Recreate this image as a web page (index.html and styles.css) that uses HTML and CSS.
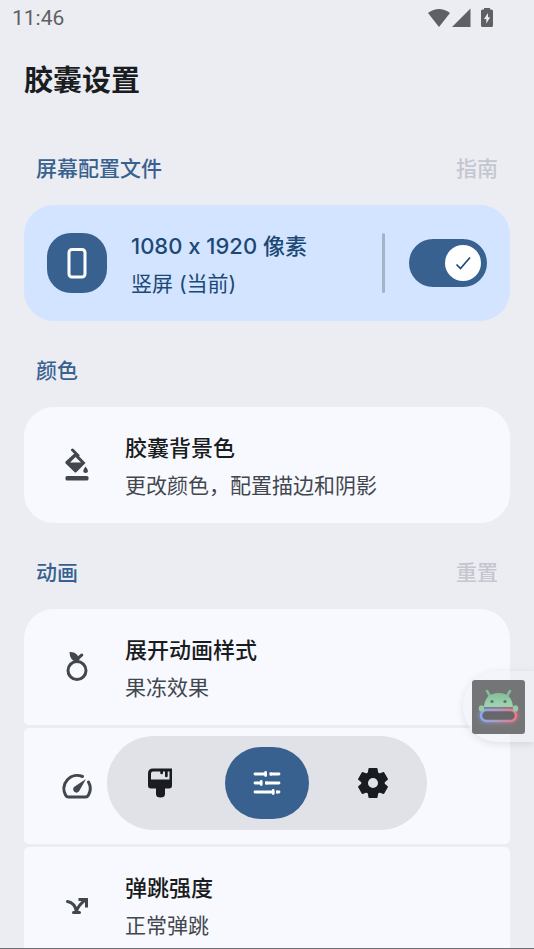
FILE: index.html
```html
<!DOCTYPE html>
<html lang="zh-CN">
<head>
<meta charset="utf-8">
<meta name="viewport" content="width=device-width, initial-scale=1">
<title>胶囊设置</title>
<link rel="stylesheet" href="styles.css">
</head>
<body>
<div class="app">
  <header class="status">
    <span class="clock">11:46</span>
    <span class="signals">
      <svg width="22" height="20" viewBox="0 0 22 20"><path d="M0 5Q11-3 22 5L11 19Z"/></svg>
      <svg width="19" height="20" viewBox="0 0 19 20"><path d="M18.500 .5V19H0Z"/></svg>
      <svg class="battery" width="12" height="20" viewBox="0 0 12 20"><path fill-rule="evenodd" d="M3 1.500V0H9V1.500H10.500Q12 1.500 12 3V17.500Q12 19 10.500 19H1.500Q0 19 0 17.500V3Q0 1.500 1.500 1.500ZM7 5L3 11H5.300V15.500L9.200 9.300H7Z"/></svg>
    </span>
  </header>
  <main class="content">
    <h1>胶囊设置</h1>

    <section>
      <div class="section-head"><h2>屏幕配置文件</h2><button class="text-button" type="button">指南</button></div>
      <div class="card profile">
        <span class="tile">
          <svg width="30" height="34" viewBox="0 0 30 34"><rect x="7" y="3.500" width="16" height="27.500" rx="3" fill="none" stroke="#fff" stroke-width="3"/></svg>
        </span>
        <label class="text" for="profile-switch"><span class="title">1080 x 1920 像素</span><span class="sub">竖屏 (当前)</span></label>
        <span class="divider"></span>
        <span class="switch">
          <input type="checkbox" id="profile-switch" checked>
          <svg class="tick" width="36" height="36" viewBox="0 0 36 36"><path d="M11.500 19.500L15.500 23.500L25 12.500" fill="none" stroke="#1c4a78" stroke-width="1.700"/></svg>
        </span>
      </div>
    </section>

    <section>
      <div class="section-head"><h2>颜色</h2></div>
      <button class="card" type="button">
        <span class="icon">
          <svg width="24" height="34" viewBox="0 0 24 34"><path d="M7.500 2L13 7.500" fill="none" stroke="#42474e" stroke-width="3" stroke-linecap="round"/><path d="M10.500 4.500L20.500 15L11.500 24Q10.500 25 9.500 24L.6 15.500Q0 14.500 .6 13.500ZM10.500 9L5 14.500H16Z" fill="#42474e" fill-rule="evenodd"/><path d="M20.500 18.500Q23 21.500 23 23Q23 25 20.600 25Q18.200 25 18.200 23Q18.200 21.500 20.500 18.500Z" fill="#42474e"/><rect x=".5" y="28" width="23" height="4.500" rx="1.500" fill="#42474e"/></svg>
        </span>
        <span class="text"><span class="title">胶囊背景色</span><span class="sub">更改颜色，配置描边和阴影</span></span>
      </button>
    </section>

    <section>
      <div class="section-head"><h2>动画</h2><button class="text-button" type="button">重置</button></div>
      <div class="group">
        <button class="card" type="button">
          <span class="icon">
            <svg width="24" height="32" viewBox="0 0 24 32"><circle cx="12" cy="19.500" r="9" fill="none" stroke="#42474e" stroke-width="3"/><path d="M4.500 1Q13 .5 14 8.500Q14 11 12 11Q4.500 9.500 4.500 1Z" fill="#42474e"/><path d="M12.500 10Q13 6.500 16.800 4" fill="none" stroke="#42474e" stroke-width="3" stroke-linecap="round"/></svg>
          </span>
          <span class="text"><span class="title">展开动画样式</span><span class="sub">果冻效果</span></span>
        </button>
        <button class="card" type="button" aria-label="动画速度">
          <span class="icon">
            <svg width="32" height="28" viewBox="0 0 32 28"><path d="M21.500 4.500A13.300 13.300 0 0 0 4.500 23Q5.500 25 7.500 25H24.500Q26.500 25 27.500 23A13.300 13.300 0 0 0 27.500 10" fill="none" stroke="#42474e" stroke-width="3" stroke-linecap="round"/><path d="M25 7L18.500 18.500A3.300 3.300 0 1 1 13.700 14.500Z" fill="#42474e"/></svg>
          </span>
        </button>
        <button class="card" type="button">
          <span class="icon">
            <svg width="24" height="20" viewBox="0 0 24 20"><g fill="none" stroke="#42474e" stroke-width="3"><path d="M2.500 6.500Q10 8 11.500 16.500Q13 10 21 4.500" stroke-linecap="round"/><path d="M13.500 4.500H21.500V12.500"/><path d="M8.500 17.500H14.500" stroke-linecap="round"/></g></svg>
          </span>
          <span class="text"><span class="title">弹跳强度</span><span class="sub">正常弹跳</span></span>
        </button>
      </div>
    </section>
  </main>

  <nav class="dock" aria-label="导航">
    <button type="button" aria-label="外观">
      <svg width="26" height="30" viewBox="0 0 26 30"><path fill="#191c20" fill-rule="evenodd" d="M5 .5H24V17.500Q24 20.500 21 20.500H17V26Q17 29.500 12.500 29.500Q8 29.500 8 26V20.500H3Q0 20.500 0 17.500V5.500Q0 .5 5 .5ZM5 3.500Q3 3.500 3 5.500V11.500H21.500V3.500H19.700V8Q19.700 9.200 18.300 9.200Q17 9.200 17 8V3.500H15V5Q15 6.200 13.700 6.200Q12.300 6.200 12.300 5V3.500Z"/></svg>
    </button>
    <button class="active" type="button" aria-label="设置" aria-current="page">
      <svg width="28" height="26" viewBox="0 0 28 26"><g fill="none" stroke="#fff" stroke-width="2.800"><path stroke-linecap="round" d="M2 4H12M2 13H7.500M2 22H20M18 4H26M14 13H26M25 22H26"/><path d="M16.500 4H19M12 13H15M23 22H25"/><path stroke-linecap="round" d="M12.600 2.500V5.500M8.200 11.500V14.500M20.200 20.500V23.500"/></g></svg>
    </button>
    <button type="button" aria-label="更多">
      <svg width="30" height="30" viewBox="0 0 30 30"><path fill="#191c20" fill-rule="evenodd" stroke="#191c20" stroke-width="1.500" stroke-linejoin="round" d="M11.200 .8H18.800L19.500 5L21.700 6.300L25.600 4.800L29.200 11.200L26 13.800V16.200L29.200 18.800L25.600 25.200L21.700 23.700L19.500 25L18.800 29.200H11.200L10.500 25L8.300 23.700L4.400 25.200L.8 18.800L4 16.200V13.800L.8 11.200L4.400 4.800L8.300 6.300L10.500 5ZM15 9.200A5.800 5.800 0 1 0 15 20.800A5.800 5.800 0 1 0 15 9.200Z"/></svg>
    </button>
  </nav>

  <button class="floating" type="button" aria-label="悬浮球">
    <svg width="53" height="54" viewBox="0 0 53 54">
      <defs>
        <linearGradient id="ring"><stop offset="0" stop-color="#8fa6ee"/><stop offset=".45" stop-color="#a99bc4"/><stop offset="1" stop-color="#f27683"/></linearGradient>
        <linearGradient id="head" x2="0" y2="1"><stop offset="0" stop-color="#83bd98"/><stop offset="1" stop-color="#a2d9b3"/></linearGradient>
        <filter id="glow" x="-20%" y="-50%" width="140%" height="200%"><feGaussianBlur stdDeviation="2"/></filter>
      </defs>
      <rect width="53" height="54" rx="3" fill="#747577"/>
      <path d="M15 11L18 16M38 11L35 16" stroke="#83bd98" stroke-width="2.500" stroke-linecap="round"/>
      <path d="M12 27Q13 13 26.500 13Q40 13 41 27Z" fill="url(#head)"/>
      <circle cx="20" cy="21.500" r="1.600" fill="#5f7468"/><circle cx="33" cy="21.500" r="1.600" fill="#5f7468"/>
      <rect x="9" y="30" width="35" height="11" rx="5.500" fill="none" stroke="url(#ring)" stroke-width="4" opacity=".6" filter="url(#glow)"/>
      <rect x="9" y="30" width="35" height="11" rx="5.500" fill="#66676a" stroke="url(#ring)" stroke-width="2.500"/>
      <ellipse cx="9.500" cy="28.500" rx="2.700" ry="3.200" fill="#94cba7"/><ellipse cx="43.500" cy="28.500" rx="2.700" ry="3.200" fill="#94cba7"/>
    </svg>
  </button>
</div>
</body>
</html>
```
FILE: styles.css
```css
* { box-sizing: border-box; }

body {
  margin: 0;
  background: #ecedf2;
  color: #191c20;
  font-family: Inter, "Noto Sans CJK SC", sans-serif;
  font-feature-settings: "calt" 0;
}

button {
  padding: 0;
  border: 0;
  background: none;
  color: inherit;
  font: inherit;
  text-align: left;
}

svg { display: block; flex: none; }

.app {
  position: relative;
  height: 100vh;
  overflow: hidden;
  border-bottom: 1px solid #6e6f74;
}

.status {
  display: flex;
  justify-content: space-between;
  align-items: center;
  height: 36px;
  padding: 0 41px 0 12px;
  color: #5e6064;
  font: 21px/36px Roboto, sans-serif;
}

.signals {
  display: flex;
  gap: 2px;
  fill: #5e6064;
}

.battery { margin-left: 8px; }

.content { padding: 25px 24px 0; }

h1, h2 { margin: 0; }

h1 {
  margin-bottom: 19px;
  font-size: 29px;
  line-height: 40px;
  font-weight: 700;
}

section { padding-top: 33px; }

.section-head {
  display: flex;
  justify-content: space-between;
  margin-bottom: 20px;
  padding: 0 12px;
  font-size: 21px;
  line-height: 32px;
}

section + section { padding-top: 34px; }

h2 {
  color: #38618f;
  font-size: inherit;
  font-weight: 500;
}

.text-button {
  color: #c4c6d0;
  font-weight: 500;
}

.card {
  display: flex;
  align-items: center;
  gap: 18px;
  width: 100%;
  height: 116px;
  padding: 0 23px;
  border-radius: 30px;
  background: #f8f9ff;
}

.group {
  display: grid;
  gap: 3px;
}

.group .card { border-radius: 5px; }
.group .card:first-child { border-radius: 30px 30px 5px 5px; }

.icon, .tile {
  display: grid;
  place-items: center;
  flex: none;
  width: 60px;
  height: 60px;
}

.tile {
  border-radius: 24px;
  background: #38618f;
}

.text {
  display: grid;
  flex: 1;
  padding-top: 4px;
  line-height: 37px;
}

.title {
  font-size: 22px;
  font-weight: 500;
}

.sub {
  color: #42474e;
  font-size: 21px;
}

.profile {
  gap: 24px;
  background: #d2e4ff;
  color: #1c4875;
}

.profile .sub { color: inherit; }

.divider {
  width: 3px;
  height: 60px;
  border-radius: 2px;
  background: #a5b3c6;
}

.switch {
  position: relative;
  width: 78px;
  height: 48px;
}

.switch input {
  display: block;
  width: 100%;
  height: 100%;
  margin: 0;
  appearance: none;
  border-radius: 24px;
  background: #38618f;
}

.tick {
  position: absolute;
  top: 6px;
  right: 6px;
  border-radius: 50%;
  background: #fff;
  pointer-events: none;
}

.dock {
  position: absolute;
  bottom: 118px;
  left: 50%;
  display: flex;
  justify-content: space-between;
  align-items: center;
  width: 320px;
  height: 94px;
  padding: 0 12px;
  border-radius: 47px;
  background: #e1e2e7;
  transform: translateX(-50%);
}

.dock button {
  display: grid;
  place-items: center;
  width: 84px;
  height: 72px;
  border-radius: 36px;
}

.dock .active { background: #38618f; }

.floating {
  position: absolute;
  right: 0;
  bottom: 206px;
  padding: 9px 9px 8px;
  border-radius: 35px 0 0 35px;
  background: rgba(240, 241, 245, 0.5);
  box-shadow: 0 2px 9px rgba(0, 0, 0, 0.1);
}
```
